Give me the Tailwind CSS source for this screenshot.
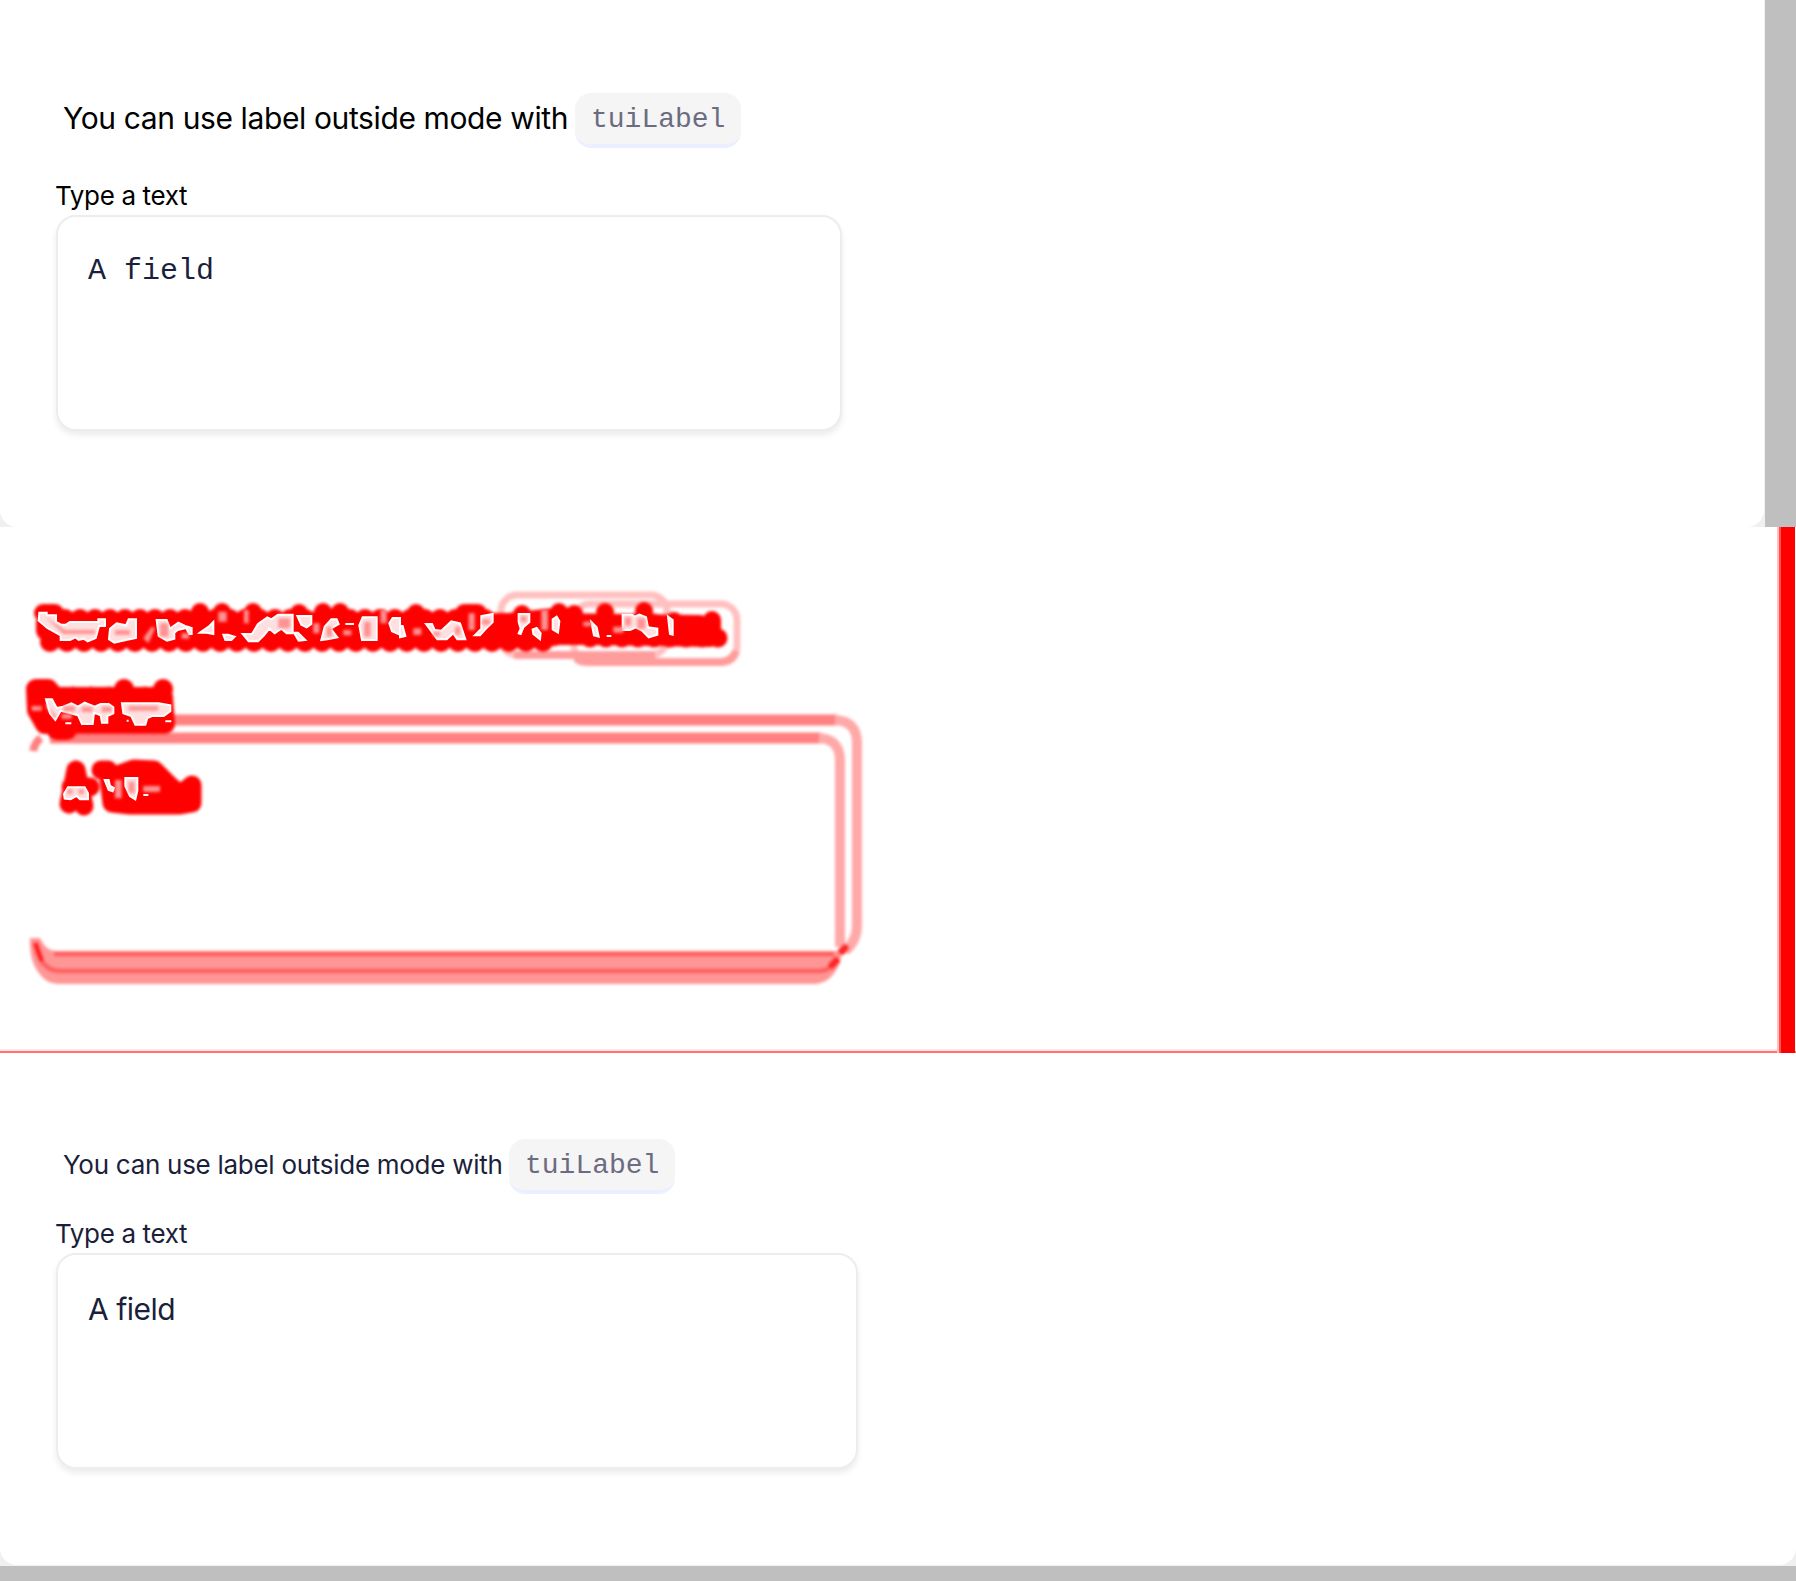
<!DOCTYPE html>
<html lang="en">
<head>
<meta charset="utf-8">
<title>Label comparison</title>
<script src="https://cdn.jsdelivr.net/npm/@tailwindcss/browser@4"></script>
</head>
<body class="flex h-[1581px] w-[1796px] flex-col overflow-hidden bg-white font-['Inter',sans-serif]">
  <section class="flex h-[527px] shrink-0 bg-[#bfbfbf]">
    <div class="w-[1765px] overflow-hidden bg-[#f0f0f0]">
      <div class="flex h-full w-[1764px] flex-col rounded-b-[17px] bg-white px-14 pt-[93px]">
        <div class="flex h-[55px] items-start gap-[8px] pl-[7px] text-black">
          <span class="w-[504px] whitespace-nowrap pt-1.5 text-[30px] leading-[38px] tracking-[-0.38px]">You can use label outside mode with</span>
          <code class="h-[55px] w-[166px] rounded-2xl border-b-4 border-[#ebefff] bg-[#f5f5f5] pl-4 font-['Liberation_Mono',monospace] text-[28px] leading-[54px] text-[#6c6c80]">tuiLabel</code>
        </div>
        <span class="-ml-px mt-[31px] h-9 whitespace-nowrap text-[26px] leading-[34px] tracking-[-0.35px] text-black">Type a text</span>
        <div class="h-[216px] w-[786px] rounded-[20px] border-2 border-[#ededed] bg-white px-[30px] pt-[36px] font-['Liberation_Mono',monospace] text-[30px] leading-[36px] text-[#1b1f3b] shadow-[0_4px_6px_rgba(0,0,0,0.08)]">A field</div>
      </div>
    </div>
  </section>

  <section class="h-[526px] shrink-0 overflow-hidden bg-white">
    <svg class="block" width="1796" height="526" viewBox="0 0 1796 526" fill="none">
      <defs>
        <filter id="soft" x="-5%" y="-20%" width="110%" height="140%"><feGaussianBlur stdDeviation="1.5"/></filter>
        <filter id="haze" x="-5%" y="-20%" width="110%" height="140%"><feGaussianBlur stdDeviation="5"/></filter>
      </defs>
      <!-- changed outlines -->
      <g filter="url(#soft)">
        <path d="M170 193H837" stroke="#ff8080" stroke-width="11"/>
        <path d="M50 211H821" stroke="#ff8080" stroke-width="11"/>
        <path d="M835 193Q857 194 857 216V398Q857 414 845 424M819 211Q840 212 840 234V420" stroke="#ffa8a8" stroke-width="10"/>
        <path d="M33 224q2-9 8-13" stroke="#ff8080" stroke-width="8"/>
        <path d="M30 411Q29 433 38 445Q46 457 58 457H815Q830 456 838 440L843 424H56Q46 424 40 411Z" fill="#ff9696"/>
        <path d="M54 427H834M35 415Q40 444 60 444H821Q832 443 837 430" stroke="#ff6060" stroke-width="5"/>
        <rect x="501" y="68" width="166" height="60" rx="16" stroke="#ffc0c0" stroke-width="7"/>
        <rect x="574" y="77" width="163" height="58" rx="16" stroke="#ffc0c0" stroke-width="7"/>
        <path d="M514 128H655M576 131Q580 135 586 135H722Q733 134 736 124" stroke="#ff9c9c" stroke-width="8"/>
        <path d="M36 418l5 14" stroke="#ff2020" stroke-width="6" stroke-linecap="round"/>
        <path d="M832 438l4-4M842 424l3-3" stroke="#ff2828" stroke-width="8" stroke-linecap="round"/>
      </g>
      <!-- changed glyph regions -->
      <g filter="url(#soft)" stroke="#ff0000" stroke-linecap="round" stroke-linejoin="round">
        <path d="M45 86L51 112H490L510 110H555M50 95H555L700 97L714 108" stroke-width="18"/>
        <path d="M47 96V103L60 108H485L500 98L555 92L565 105L590 100L650 97L710 109L590 107H60" stroke-width="22"/>
        <path d="M50 115H560" stroke-width="20" stroke-dasharray="0 17"/>
        <path d="M65 92H495" stroke-width="20" stroke-dasharray="0 15"/>
        <path d="M590 111H722" stroke-width="19" stroke-dasharray="0 16"/>
        <path d="M43 86h12M200 85h.1M222 85h.1M253 85h.1M299 86h.1M323 85h.1M340 85h.1M416 86h.1M464 86h14M522 87h.1M559 85h.1M574 87h.1M605 85h.1M644 84h.1M674 94h.1M712 93v12" stroke-width="18"/>
        <path d="M36 162H48L55 170H163L165 197H45L37 183ZM60 183H155M57 203H67" stroke-width="20"/>
        <path d="M55 169H168" stroke-width="19" stroke-dasharray="0 18"/>
        <path d="M124 162h.1M163 162h.1" stroke-width="20"/>
        <path d="M76 243L69 277M76 243L84 279M71 260H90M101 243H108L112 276L130 278H180L192 276V258L180 268L168 257L154 243L134 242L112 250V272M122 258H165M122 270H180" stroke-width="19"/>
      </g>
      <!-- unchanged islands inside the glyph regions -->
      <g transform="translate(0 53) scale(.33333)" fill="#ffe0e0" stroke="#ffffff" stroke-width="6">
        <path d="M118 98h22v8h28v20l15 8h15l12-8h85v-8h20v20h-18l-10 36-24 10-12-8-15 4-10-8-16 8h-28v-14l-40-22-26-22z"/>
        <path d="M330 146l20-16 28 6 8-18h22v56l-40 8-25 6-16-10z"/>
        <path d="M470 120h30l10 26 25-18 20 10 20 6v18h-8l-8-18-26 6-10 8v18l-22 6-25-14z"/>
        <path d="M600 158l26-18 14-14v36l-20-4zM670 164h14l20 6-10 10h-18zM728 162h28l18-30 28-20 12 6 20-14h44v56h-18l-16-14-20 14-16-14-16 20-18 18h-28z"/>
        <path d="M892 108h42v24l-14 10-16-8zM882 158h12l22 22-20 2zM964 180l10-40 20-22h16l6 14-24 14 20 26-30 6zM1036 132h26M1078 136l10-24h42v68h-44zM1168 130l10-16h22v50l-24-10z"/>
        <path d="M138 358h18l14 26 20-4 24-10 20 10 20-12 30 12 18-8h24l14 10v18l-18 8v20h-16l-4-22-20-8-4 34h-32l-12-26-28-8-24-6-16 28-16-20z"/>
        <path d="M196 430h18M366 370h110l35 6v18l-20 14h-35l-14 6-6 20h-30l-12-26-24-8zM380 422h6M496 424h18"/>
        <path d="M192 642l12-20h50l10 18v18h-24l-10-10-18 10-18-2zM314 600h12l4 18 12 6-4 10-12-4zM376 594h36v38l-6 26-16-10-14-30zM430 645h15"/>
      </g>
      <g transform="translate(400 53) scale(.33333)" fill="#ffe0e0" stroke="#ffffff" stroke-width="6">
        <path d="M0 138h8l8 30-16 4zM78 132h18l8 18 20 2 30-28 26 6 16 48h-24l-12-18-20 18h-28zM224 166l20-20v-38l34-6v24l-20 20-18 20zM356 102h32v24l-18 16-8 20-6-2 6-14-6-20zM398 148l12-4 12 16-2 18-20-16zM458 118l12-8 8 14-4 34-16-10z"/>
        <path d="M574 126l16 16 6 28-14-4zM620 168h14M668 104h28l8 6 14-6 20 8 6 30 28 4v18l-26 8-20-20-18-10-18 8h-22zM804 110l14 10v44l-8-2z"/>
      </g>
      <!-- partial differences -->
      <g transform="translate(0 53) scale(.33333)" filter="url(#haze)" fill="#ff9292">
        <path d="M135 110l60 40h90v12h-95zM345 150h45v15h-45zM480 130h25v40h-25zM655 95h25v30h-25zM732 90h14v40h-14zM835 115h35v30h-35zM940 130h18v30h-18zM980 140h16v30h-16zM1030 150h24v16h-24zM1092 125h20v45h-20zM1142 90h18v40h-18zM430 175l25-35 10 5-20 45zM545 160h22v16h-22z"/>
        <path d="M148 380l22 30-8 6zM190 378h35v16h-35zM245 380h32v16h-32zM305 380h30v16h-30zM385 378h90v14h-90zM185 402h30v14h-30zM95 378h30v14h-30z"/>
        <path d="M202 628h16v14h-16zM236 628h16v14h-16zM345 600h20v55h-20zM386 605h18v35h-18zM430 618h50v18h-50z"/>
      </g>
      <g transform="translate(400 53) scale(.33333)" filter="url(#haze)" fill="#ff9292">
        <path d="M40 145h24v20h-24zM100 155h20v14h-20zM165 140h16v24h-16zM206 100h18v50h-18zM246 118h24v16h-24zM362 108h18v18h-18zM424 90h20v60h-20zM550 125h24v14h-24zM640 140h30v18h-30zM675 112h18v25h-18zM712 115h24v32h-24z"/>
      </g>
      <!-- size difference along the right and bottom edges -->
      <path d="M0 523H1777" stroke="#ffe5e5" stroke-width="2"/>
      <path d="M0 525H1796" stroke="#ff7373" stroke-width="2"/>
      <path d="M1778 0V526" stroke="#ffc0c0" stroke-width="2"/>
      <path d="M1787 0V526" stroke="#ff0000" stroke-width="16"/>
      <path d="M1780 0V526" stroke="#ff5050" stroke-width="2"/>
    </svg>
  </section>

  <section class="flex h-[528px] shrink-0 flex-col bg-[#bfbfbf]">
    <div class="h-[513px] overflow-hidden bg-[#f0f0f0]">
      <div class="flex h-[512px] w-full flex-col rounded-b-[17px] bg-white px-14 pt-[86px]">
        <div class="flex h-[55px] items-start gap-[7px] pl-[7px] text-[#1b1f3b]">
          <span class="w-[439px] whitespace-nowrap pt-[7px] text-[26px] leading-[38px] tracking-[-0.28px]">You can use label outside mode with</span>
          <code class="h-[55px] w-[166px] rounded-2xl border-b-4 border-[#ebefff] bg-[#f5f5f5] pl-4 font-['Liberation_Mono',monospace] text-[28px] leading-[54px] text-[#6c6c80]">tuiLabel</code>
        </div>
        <span class="-ml-px mt-[23px] h-9 whitespace-nowrap text-[26px] leading-[34px] tracking-[-0.35px] text-[#1b1f3b]">Type a text</span>
        <div class="h-[216px] w-[802px] rounded-[20px] border-2 border-[#ededed] bg-white px-[30px] pt-[36px] text-[30px] leading-[36px] tracking-[-0.5px] text-[#1b1f3b] shadow-[0_4px_6px_rgba(0,0,0,0.08)]">A field</div>
      </div>
    </div>
  </section>
</body>
</html>
